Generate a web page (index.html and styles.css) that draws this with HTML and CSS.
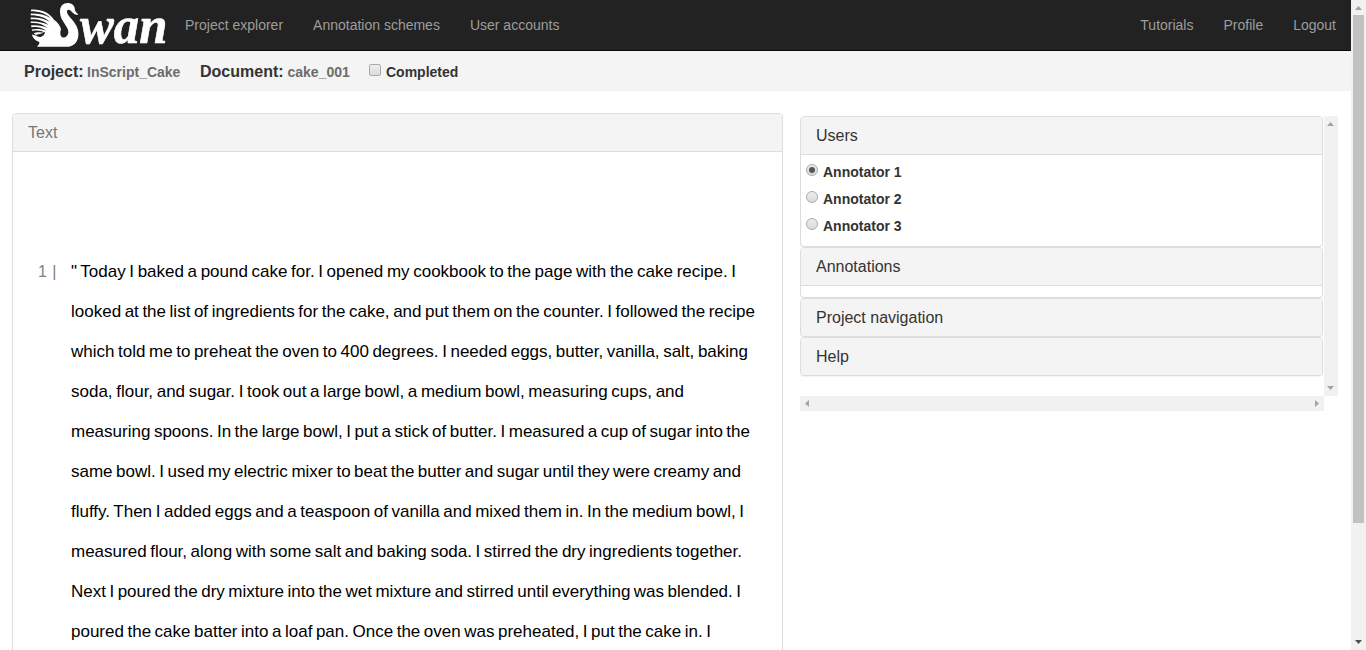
FILE: index.html
```html
<!DOCTYPE html>
<html lang="en">
<head>
<meta charset="utf-8">
<title>Swan</title>
<link rel="stylesheet" href="styles.css">
</head>
<body>
<div class="app">
  <div class="page">
    <nav class="navbar">
      <svg class="logo" viewBox="0 0 450 150" role="img" aria-label="Swan">
        <path class="logo-fill" d="M21 29 C52 27 75 38 90 59 C101 67 108 76 111 87 C108 97 108 106 113 111 C121 116 131 109 133 99 C136 80 109 66 108 37 C107 17 119 8 134 9 C150 11 153 23 153 31 C155 37 160 40 163 45 C155 45 148 41 143 35 C138 28 131 27 129 33 C126 48 161 65 163 97 C165 121 154 137 135 140 L39 140 C43 135 47 132 46 126 C31 121 25 112 24 103 C28 105 32 107 37 106 C29 101 24 94 23 86 C20 73 19 53 21 29Z"/>
        <g class="logo-slits">
          <path d="M14 34 C44 33 66 41 80 54 C62 44 42 40 14 41Z"/>
          <path d="M14 46 C43 45 63 52 77 65 C60 56 40 51 14 53Z"/>
          <path d="M14 58 C41 56 61 62 74 75 C57 67 39 63 14 65Z"/>
          <path d="M14 70 C39 67 58 73 71 84 C55 77 38 74 15 77Z"/>
          <path d="M14 83 C36 78 54 82 67 92 C51 87 36 85 17 90Z"/>
          <path d="M16 96 C35 89 50 91 63 98 C49 96 37 95 26 101Z"/>
        </g>
        <path class="logo-gap" d="M35 105 C46 102 55 101 63 96 C62 104 56 111 47 111 C40 110 38 108 35 105Z"/>
        <text class="logo-text" x="168" y="128" textLength="262" lengthAdjust="spacingAndGlyphs">wan</text>
      </svg>
      <div class="nav-links">
        <a>Project explorer</a><a>Annotation schemes</a><a>User accounts</a>
      </div>
      <div class="nav-links nav-right">
        <a>Tutorials</a><a>Profile</a><a>Logout</a>
      </div>
    </nav>
    <header class="docbar">
      <span class="doc-item doc-project">Project: <small>InScript_Cake</small></span>
      <span class="doc-item doc-name">Document: <small>cake_001</small></span>
      <label class="completed"><span class="check"></span>Completed</label>
    </header>
    <main class="columns">
      <section class="text-panel">
        <h2 class="heading muted">Text</h2>
        <div class="document">
          <span class="line-number">1 |</span>
          <div class="lines">
            <p style="width:665px">" Today I baked a pound cake for. I opened my cookbook to the page with the cake recipe. I</p>
            <p style="width:684px">looked at the list of ingredients for the cake, and put them on the counter. I followed the recipe</p>
            <p style="width:677px">which told me to preheat the oven to 400 degrees. I needed eggs, butter, vanilla, salt, baking</p>
            <p style="width:613px">soda, flour, and sugar. I took out a large bowl, a medium bowl, measuring cups, and</p>
            <p style="width:679px">measuring spoons. In the large bowl, I put a stick of butter. I measured a cup of sugar into the</p>
            <p style="width:670px">same bowl. I used my electric mixer to beat the butter and sugar until they were creamy and</p>
            <p style="width:673px">fluffy. Then I added eggs and a teaspoon of vanilla and mixed them in. In the medium bowl, I</p>
            <p style="width:671px">measured flour, along with some salt and baking soda. I stirred the dry ingredients together.</p>
            <p style="width:670px">Next I poured the dry mixture into the wet mixture and stirred until everything was blended. I</p>
            <p style="width:640px">poured the cake batter into a loaf pan. Once the oven was preheated, I put the cake in. I</p>
          </div>
        </div>
      </section>
      <aside class="side">
        <div class="side-content">
          <section class="panel">
            <h2 class="heading">Users</h2>
            <div class="users">
              <label><span class="radio selected"></span>Annotator 1</label>
              <label><span class="radio"></span>Annotator 2</label>
              <label><span class="radio"></span>Annotator 3</label>
            </div>
          </section>
          <section class="panel"><h2 class="heading">Annotations</h2><div class="empty"></div></section>
          <section class="panel closed"><h2 class="heading">Project navigation</h2></section>
          <section class="panel closed"><h2 class="heading">Help</h2></section>
        </div>
        <div class="bar-v">
          <svg width="7" height="4" viewBox="0 0 7 4"><path d="M0 4L3.5 0L7 4Z"/></svg>
          <svg width="7" height="4" viewBox="0 0 7 4"><path d="M0 0H7L3.5 4Z"/></svg>
        </div>
        <div class="bar-h">
          <svg width="4" height="7" viewBox="0 0 4 7"><path d="M4 0V7L0 3.5Z"/></svg>
          <svg width="4" height="7" viewBox="0 0 4 7"><path d="M0 0V7L4 3.5Z"/></svg>
        </div>
      </aside>
    </main>
  </div>
  <div class="page-scroll">
    <svg width="7" height="4" viewBox="0 0 7 4"><path d="M0 4L3.5 0L7 4Z"/></svg>
    <div class="thumb"></div>
    <svg class="dark" width="7" height="4" viewBox="0 0 7 4"><path d="M0 0H7L3.5 4Z"/></svg>
  </div>
</div>
</body>
</html>
```
FILE: styles.css
```css
* { box-sizing: border-box; }
body { margin: 0; font: 14px/20px "Liberation Sans", Arial, sans-serif; color: #333; background: #fff; overflow: hidden; }
.app { display: flex; height: 650px; }
.page { width: 1351px; height: 650px; overflow: hidden; flex: none; }

.navbar { display: flex; height: 51px; background: #222; border-bottom: 1px solid #080808; padding-left: 24px; }
.logo { width: 150px; height: 50px; flex: none; margin-right: 11px; overflow: visible; }
.logo-fill, .logo-text { fill: #fff; }
.logo-slits { fill: #222; }
.logo-gap { fill: #222; }
.logo-text { font: italic bold 156px "Liberation Serif", serif; stroke: #fff; stroke-width: 2; }
.nav-links { display: flex; gap: 30px; padding-top: 15px; color: #9d9d9d; white-space: nowrap; }
.nav-right { margin-left: auto; padding-right: 15px; }

.docbar { display: flex; height: 40px; background: #f4f4f4; padding: 11px 0 0 24px; font-size: 16px; font-weight: bold; white-space: nowrap; }
.doc-item small { font-size: 14px; color: #6c6c6c; margin-left: -1px; }
.doc-name small { margin-left: -0.5px; }
.doc-project { width: 176px; }
.doc-name { width: 169px; }
.completed { display: flex; gap: 5px; font-size: 14px; }
.check { width: 12px; height: 12px; margin-top: 2px; border: 1px solid #aaa; border-radius: 2px; background: linear-gradient(#eee, #dcdcdc); }

.columns { display: flex; padding-left: 12px; }
.heading { margin: 0; height: 38px; padding: 9px 15px; font-size: 16px; font-weight: normal; line-height: 19px; background: #f4f4f4; border-bottom: 1px solid #ddd; }
.muted { color: #777; }
.text-panel { width: 771px; height: 600px; margin-top: 22px; border: 1px solid #ddd; border-radius: 4px; overflow: hidden; flex: none; }
.document { display: flex; padding: 100px 0 0 25px; font-size: 17px; line-height: 40px; }
.line-number { width: 33px; color: #808080; flex: none; font-size: 16px; word-spacing: 1px; }
.lines { color: #000; }
.lines p { margin: 0; height: 40px; white-space: nowrap; word-spacing: -2px; text-align-last: justify; }

.side { display: grid; grid-template: 280px 15px / 524px 14px; margin: 25px 0 0 17px; align-self: start; }
.panel { border: 1px solid #ddd; border-radius: 4px; overflow: hidden; background: #fff; box-shadow: 0 1px 1px rgba(0,0,0,.05); }
.side-content { padding-right: 1px; }
.side .heading { padding-left: 15px; }
.users { display: flex; flex-direction: column; gap: 7px; height: 91px; padding: 7px 0 0 5px; font-weight: bold; }
.users label { display: flex; gap: 5px; }
.radio { display: flex; align-items: center; justify-content: center; width: 12px; height: 12px; margin-top: 2px; border: 1px solid #aaa; border-radius: 50%; background: linear-gradient(#eee, #dadada); }
.selected::after { content: ""; width: 6px; height: 6px; border-radius: 50%; background: #555; }
.empty { height: 11px; }
.closed { height: 39px; }
.bar-v, .bar-h, .page-scroll { display: flex; justify-content: space-between; align-items: center; background: #f1f1f1; fill: #a3a3a3; }
.bar-v { flex-direction: column; padding: 6px 1px 6px 0; }
.bar-h { padding: 0 5px; }
.page-scroll { flex-direction: column; width: 15px; height: 650px; padding: 6px 0; }
.thumb { width: 11px; height: 508px; background: #c1c1c1; margin: 5px 1px 0 0; }
.page-scroll .dark { fill: #505050; margin-top: auto; }
```
